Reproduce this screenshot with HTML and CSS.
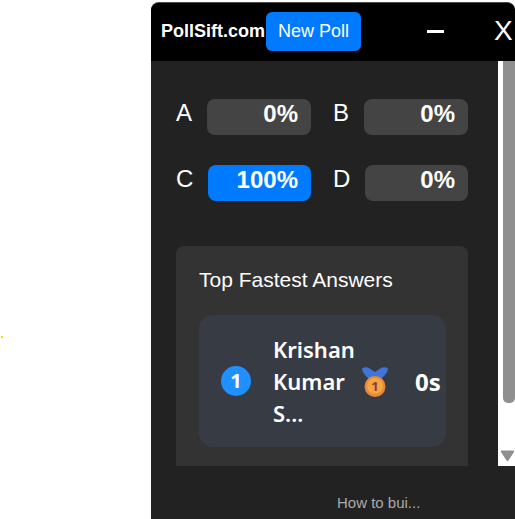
FILE: index.html
```html
<!DOCTYPE html>
<html lang="en">
<head>
<meta charset="utf-8">
<title>PollSift</title>
<link rel="stylesheet" href="styles.css">
</head>
<body>
<span class="speck"></span>
<div class="panel">
  <header class="head">
    <span class="brand">PollSift.com</span>
    <button class="new-poll">New Poll</button>
    <span class="minimize"></span>
    <span class="close">X</span>
  </header>
  <div class="main">
    <div class="content">
      <div class="options">
        <div class="option"><span class="letter">A</span><div class="bar"><span class="pct">0%</span></div></div>
        <div class="option"><span class="letter">B</span><div class="bar"><span class="pct">0%</span></div></div>
        <div class="option"><span class="letter">C</span><div class="bar bar-full"><span class="pct">100%</span></div></div>
        <div class="option"><span class="letter">D</span><div class="bar"><span class="pct">0%</span></div></div>
      </div>
      <section class="card">
        <h2 class="card-title">Top Fastest Answers</h2>
        <div class="answer">
          <span class="rank">1</span>
          <span class="name">Krishan Kumar S...</span>
          <svg class="medal" viewBox="0 0 28 34" width="28" height="34" aria-hidden="true">
            <path d="M1 4.500 Q4.500 2.500 8 4 L14 8 L20 4 Q23.500 2.500 27 4.500 Q26.500 9 24 11 L18 17 H10 L4 11 Q1.500 9 1 4.500Z" fill="#3f74d9"/>
            <circle cx="14" cy="22.500" r="10.500" fill="#e8883a"/>
            <circle cx="14" cy="22" r="8" fill="#f5a53f"/>
            <text x="14" y="27" text-anchor="middle" class="medal-num">1</text>
          </svg>
          <span class="time">0s</span>
        </div>
      </section>
    </div>
    <div class="scrollbar">
      <div class="thumb"></div>
      <svg class="arrow" viewBox="0 0 14 12" width="15" height="12" aria-hidden="true"><path d="M1 0.500H13Q14 0.500 13.500 2L8 10.500Q7 11.500 6 10.500L0.500 2Q0 0.500 1 0.500Z" fill="#8f8f8f"/></svg>
    </div>
  </div>
  <footer class="foot">How to bui...</footer>
</div>
</body>
</html>
```
FILE: styles.css
```css
html, body {
  margin: 0;
  height: 100%;
  background: #fff;
  overflow: hidden;
  font-family: "Liberation Sans", Arial, sans-serif;
}
.speck {
  position: absolute;
  left: 1px;
  top: 336px;
  width: 2px;
  height: 2px;
  background: #ffd800;
}
.panel {
  position: absolute;
  left: 151px;
  top: 2px;
  width: 364px;
  height: 517px;
  display: flex;
  flex-direction: column;
  background: #222;
  color: #fff;
  border-top: 1px solid #4a4a4a;
  border-radius: 8px 8px 0 0;
  overflow: hidden;
}
.head {
  flex: none;
  height: 58px;
  display: flex;
  align-items: center;
  background: #000;
  padding: 0 0 2px 10px;
  box-sizing: border-box;
}
.brand {
  font-size: 18px;
  font-weight: 700;
  width: 105px;
  white-space: nowrap;
}
.new-poll {
  width: 95px;
  height: 39px;
  padding: 0;
  border: 0;
  border-radius: 6px;
  background: #007bff;
  color: #fff;
  font: 18px "Liberation Sans", Arial, sans-serif;
}
.minimize {
  width: 17px;
  height: 3px;
  margin-left: 66px;
  background: #fff;
}
.close {
  margin-left: 50px;
  font-size: 28px;
  line-height: 1;
}
.main {
  flex: none;
  height: 405px;
  display: flex;
}
.content {
  width: 347px;
  box-sizing: border-box;
  padding: 38px 30px 0 25px;
  overflow: hidden;
}
.options {
  display: grid;
  grid-template-columns: 135px 135px;
  column-gap: 22px;
  row-gap: 30px;
}
.option {
  display: flex;
  gap: 15px;
  height: 36px;
}
.letter {
  font-size: 24px;
  line-height: 28px;
}
.bar {
  flex: 1;
  background: #444;
  border-radius: 8px;
  text-align: right;
  padding-right: 13px;
}
.bar-full {
  background: #007bff;
}
.pct {
  font-size: 24px;
  font-weight: 700;
  line-height: 30px;
}
.card {
  margin-top: 45px;
  padding: 22px 22px 40px 23px;
  background: #333;
  border-radius: 8px;
}
.card-title {
  margin: 0 0 23px;
  font-size: 21px;
  font-weight: 400;
  line-height: 24px;
}
.answer {
  height: 132px;
  display: flex;
  align-items: center;
  padding-left: 22px;
  background: #373b44;
  border-radius: 14px;
}
.rank {
  flex: none;
  width: 30px;
  height: 30px;
  border-radius: 50%;
  background: #1e90ff;
  font: 700 20px/30px "Noto Sans", sans-serif;
  text-align: center;
}
.name {
  flex: none;
  width: 88px;
  margin-left: 22px;
  font: 600 22px/32px "Noto Sans", sans-serif;
}
.medal {
  flex: none;
}
.medal-num {
  font: 700 13px "Noto Sans", sans-serif;
  fill: #8a3b4a;
}
.time {
  margin-left: 26px;
  font: 700 24px "Noto Sans", sans-serif;
}
.scrollbar {
  flex: none;
  width: 17px;
  display: flex;
  flex-direction: column;
  align-items: flex-end;
  background: #fff;
  position: relative;
}
.thumb {
  width: 12px;
  height: 342px;
  background: #8f8f8f;
  border-radius: 0 0 5px 5px;
}
.arrow {
  position: absolute;
  right: 0;
  bottom: 4px;
}
.foot {
  flex: 1;
  padding: 28px 0 0 186px;
  font-size: 15px;
  color: #aaa;
}
```
